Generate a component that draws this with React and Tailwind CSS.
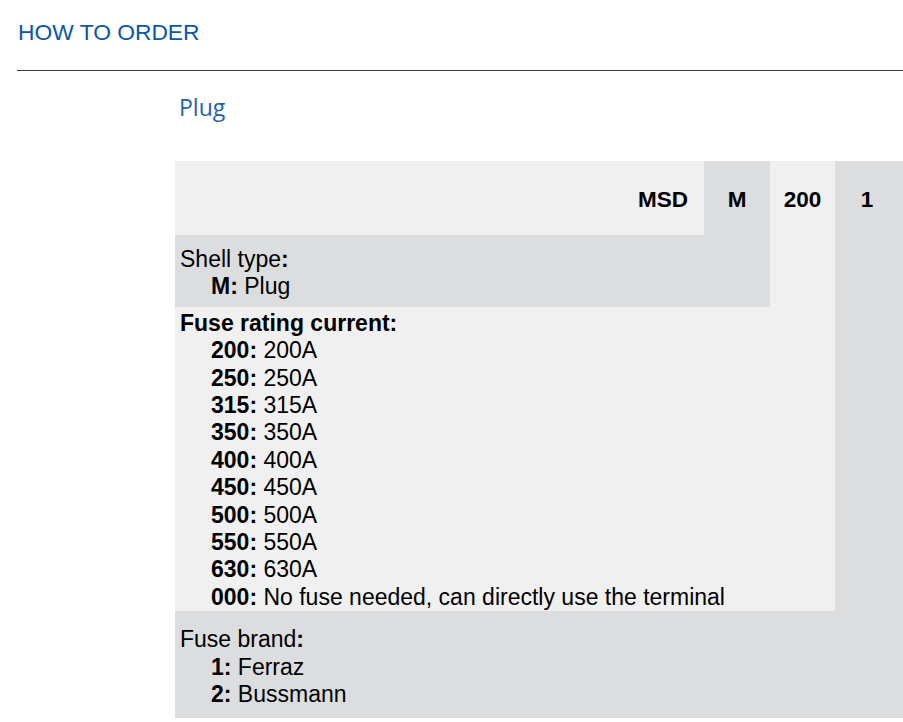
const FUSES = [
  ['200', '200A'],
  ['250', '250A'],
  ['315', '315A'],
  ['350', '350A'],
  ['400', '400A'],
  ['450', '450A'],
  ['500', '500A'],
  ['550', '550A'],
  ['630', '630A'],
  ['000', 'No fuse needed, can directly use the terminal'],
]

function Item({ code, label }) {
  return (
    <div className="pl-[31px]">
      <b>{code}:</b> {label}
    </div>
  )
}

export default function App() {
  return (
    <div className="min-h-[722px] bg-white font-['Liberation_Sans',Arial,sans-serif] text-black">
      <div className="pl-[17px]">
        <h2 className="pt-[17px] pl-px text-[22.8px] leading-[30px] text-[#0a58a8]">HOW TO ORDER</h2>
        <div className="mt-[23px] h-px bg-[#3a3a3a]" />
      </div>

      <div className="pl-[175px]">
        <h3 className="pt-[21px] pl-[4px] font-['Open_Sans',sans-serif] text-[23px] leading-[30px] text-[#1f62ad]">
          Plug
        </h3>

        <div className="mt-[39px] grid grid-cols-[529px_66px_65px_1fr] text-[23px] leading-[27.4px]">
          {/* header row */}
          <div className="col-start-1 row-start-1 flex h-[74px] items-center justify-end bg-[#f0f0f0] pt-[3px] pr-[16px] text-[22.5px] font-bold">
            MSD
          </div>
          <div className="col-start-2 row-start-1 flex items-center justify-center bg-[#dcdddf] pt-[3px] text-[22.5px] font-bold">
            M
          </div>
          <div className="col-start-3 row-start-1 row-span-2 bg-[#f0f0f0]">
            <div className="flex h-[74px] items-center justify-center pt-[3px] text-[22.5px] font-bold">200</div>
          </div>
          <div className="col-start-4 row-start-1 row-span-3 bg-[#dcdddf]">
            <div className="flex h-[74px] items-center justify-center pt-[3px] pr-[4px] text-[22.5px] font-bold">1</div>
          </div>

          {/* shell type */}
          <div className="col-span-2 col-start-1 row-start-2 bg-[#dcdddf] pt-[11px] pb-[6px] pl-[5px]">
            <div>
              Shell type<b>:</b>
            </div>
            <Item code="M" label="Plug" />
          </div>

          {/* fuse rating */}
          <div className="col-span-3 col-start-1 row-start-3 bg-[#f0f0f0] pt-[3px] pl-[5px]">
            <div className="font-bold">Fuse rating current:</div>
            {FUSES.map(([c, l]) => (
              <Item key={c} code={c} label={l} />
            ))}
          </div>

          {/* fuse brand */}
          <div className="col-span-4 col-start-1 row-start-4 bg-[#dcdddf] pt-[15px] pb-[9px] pl-[5px]">
            <div>
              Fuse brand<b>:</b>
            </div>
            <Item code="1" label="Ferraz" />
            <Item code="2" label="Bussmann" />
          </div>
        </div>
      </div>
    </div>
  )
}
